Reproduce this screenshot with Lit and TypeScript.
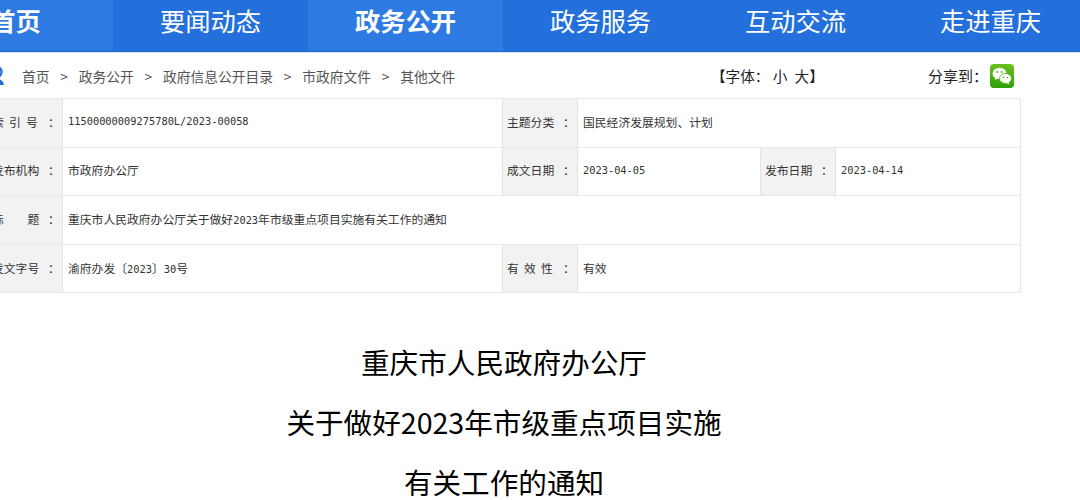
import { LitElement, html, css } from "lit";
import { customElement } from "lit/decorators.js";

const navItems = ["首页", "要闻动态", "政务公开", "政务服务", "互动交流", "走进重庆"];
const crumbs = ["首页", "政务公开", "政府信息公开目录", "市政府文件", "其他文件"];

@customElement("app-root")
export class AppRoot extends LitElement {
  static styles = css`
    :host {
      display: block;
      width: 1080px;
      height: 500px;
      overflow: hidden;
      background: #fff;
      color: #333;
      font-family: "Noto Sans CJK SC", sans-serif;
    }

    .nav {
      display: flex;
      height: 51px;
      margin-left: -82px;
      width: 1170px;
      background: #2370dc;
      border-bottom: 1px solid #1c68d2;
    }

    .nav a {
      width: 195px;
      text-align: center;
      color: #fff;
      font-size: 25.3px;
      line-height: 40px;
    }

    .nav a.light {
      background: #2d7be2;
    }

    .nav a.strong {
      font-weight: 700;
    }

    .bar {
      display: flex;
      align-items: center;
      box-sizing: border-box;
      height: 46px;
      border-top: 1px solid #d5e5fa;
      font-size: 13.75px;
    }

    .pin {
      display: block;
      margin-left: -12px;
      margin-right: 17px;
    }

    .crumbs {
      display: flex;
      gap: 10.8px;
      color: #555;
      width: 689px;
    }

    .font-tool {
      width: 217px;
      color: #222;
      font-size: 14.6px;
    }

    .font-tool span {
      word-spacing: 4px;
    }

    .share {
      display: flex;
      align-items: center;
      gap: 2px;
      color: #222;
      font-size: 15px;
    }

    .table {
      display: grid;
      grid-template-columns: 76px 439px 76px 182px 76px 184px;
      grid-auto-rows: 48.6px;
      width: 1033px;
      margin-left: -13px;
      border-top: 1px solid #e8e8e8;
      border-right: 1px solid #e8e8e8;
      font-size: 11.8px;
      color: #333;
    }

    .cell {
      display: flex;
      align-items: center;
      padding: 0 0 3px 5px;
      border-bottom: 1px solid #e8e8e8;
      box-sizing: border-box;
      white-space: pre;
    }

    .label {
      background: #f2f2f2;
      border-left: 1px solid #e4e4e4;
      border-right: 1px solid #e4e4e4;
      padding-left: 4px;
    }

    .label .name {
      display: inline-block;
      width: 56px;
      word-spacing: 2.5px;
    }

    .wide {
      grid-column: span 3;
    }

    .full {
      grid-column: span 5;
    }

    .num {
      font-family: "DejaVu Sans Mono", monospace;
      font-size: 10.35px;
    }

    .title {
      width: 1008px;
      margin-top: 39px;
      text-align: center;
      font-size: 28.6px;
      line-height: 60px;
      color: #000;
    }
  `;

  private label(name: string) {
    return html`<div class="cell label"><span class="name">${name}</span><span>：</span></div>`;
  }

  render() {
    return html`
      <div class="nav">
        ${navItems.map(
          (item, i) =>
            html`<a class="${i === 0 || i === 2 ? "light strong" : ""}">${item}</a>`
        )}
      </div>
      <div class="bar">
        <svg class="pin" width="17" height="20" viewBox="0 0 17 20">
          <circle cx="8.5" cy="6" r="5" fill="none" stroke="#2370dc" stroke-width="2.4" />
          <path d="M1 19c1-5 4-6 7.500-6s6.500 1 7.500 6z" fill="#2370dc" />
        </svg>
        <div class="crumbs">
          ${crumbs.map(
            (c, i) => html`${i > 0 ? html`<span>&gt;</span>` : ""}<span>${c}</span>`
          )}
        </div>
        <div class="font-tool">【字体： <span>小 大</span>】</div>
        <div class="share">
          <span>分享到：</span>
          <svg width="24" height="24" viewBox="0 0 24 24">
            <defs>
              <linearGradient id="wx" x1="0" y1="0" x2="0" y2="1">
                <stop offset="0" stop-color="#6cc11c" />
                <stop offset="1" stop-color="#2f9e0b" />
              </linearGradient>
            </defs>
            <rect width="24" height="24" rx="4" fill="url(#wx)" />
            <ellipse cx="9.500" cy="9.500" rx="7" ry="5.800" fill="#fff" />
            <path d="M5.500 13l-.8 3 3.300-1.800z" fill="#fff" />
            <ellipse cx="15.500" cy="14.500" rx="6" ry="5" fill="#fff" stroke="#4aae12" stroke-width=".8" />
            <path d="M18.500 18l.8 2.600-3-1.600z" fill="#fff" />
            <circle cx="7.200" cy="8" r=".9" fill="#4aae12" />
            <circle cx="11.600" cy="8" r=".9" fill="#4aae12" />
            <circle cx="13.500" cy="13.500" r=".8" fill="#4aae12" />
            <circle cx="17.500" cy="13.500" r=".8" fill="#4aae12" />
          </svg>
        </div>
      </div>
      <div class="table">
        ${this.label("索 引 号")}
        <div class="cell"><span class="num">11500000009275780L/2023-00058</span></div>
        ${this.label("主题分类")}
        <div class="cell wide">国民经济发展规划、计划</div>

        ${this.label("发布机构")}
        <div class="cell">市政府办公厅</div>
        ${this.label("成文日期")}
        <div class="cell"><span class="num">2023-04-05</span></div>
        ${this.label("发布日期")}
        <div class="cell"><span class="num">2023-04-14</span></div>

        ${this.label("标　　题")}
        <div class="cell full">
          <div>重庆市人民政府办公厅关于做好<span class="num">2023</span>年市级重点项目实施有关工作的通知</div>
        </div>

        ${this.label("发文字号")}
        <div class="cell"><div>渝府办发〔<span class="num">2023</span>〕<span class="num">30</span>号</div></div>
        ${this.label("有 效 性")}
        <div class="cell wide">有效</div>
      </div>
      <div class="title">
        <div>重庆市人民政府办公厅</div>
        <div>关于做好2023年市级重点项目实施</div>
        <div>有关工作的通知</div>
      </div>
    `;
  }
}
